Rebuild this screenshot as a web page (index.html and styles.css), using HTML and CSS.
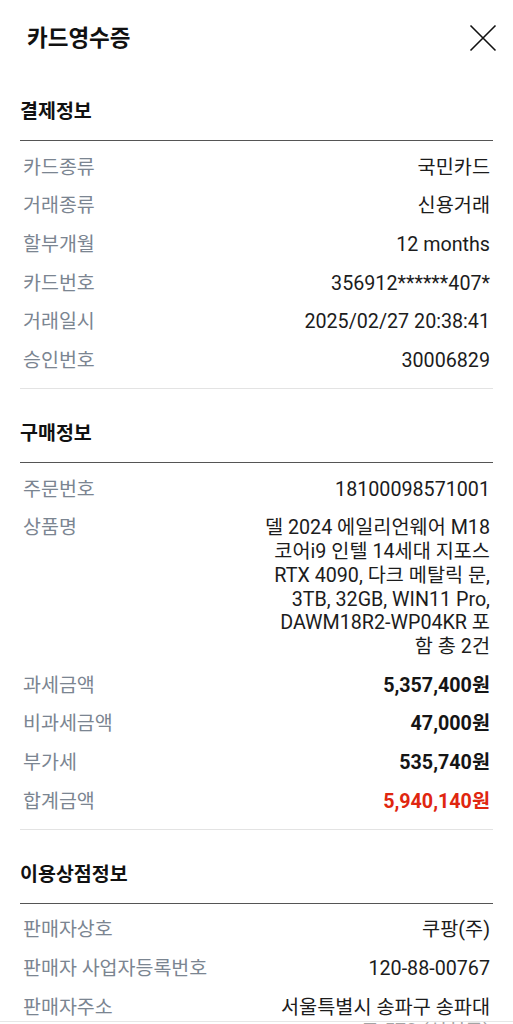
FILE: index.html
```html
<!DOCTYPE html>
<html lang="ko">
<head>
<meta charset="utf-8">
<title>카드영수증</title>
<link rel="stylesheet" href="styles.css">
</head>
<body>
<header class="header">
  <h1 class="title">카드영수증</h1>
  <button class="close" aria-label="닫기">
    <svg width="28" height="28" viewBox="0 0 28 28"><path d="M1.5 1.5 L26.5 26.5 M26.5 1.5 L1.5 26.5" stroke="#111" stroke-width="1.6" fill="none"/></svg>
  </button>
</header>

<section class="section">
  <h2 class="section-title">결제정보</h2>
  <dl class="rows">
    <div class="row"><dt>카드종류</dt><dd>국민카드</dd></div>
    <div class="row"><dt>거래종류</dt><dd>신용거래</dd></div>
    <div class="row"><dt>할부개월</dt><dd>12 months</dd></div>
    <div class="row"><dt>카드번호</dt><dd>356912******407*</dd></div>
    <div class="row"><dt>거래일시</dt><dd>2025/02/27 20:38:41</dd></div>
    <div class="row"><dt>승인번호</dt><dd>30006829</dd></div>
  </dl>
</section>

<section class="section">
  <h2 class="section-title">구매정보</h2>
  <dl class="rows">
    <div class="row"><dt>주문번호</dt><dd>18100098571001</dd></div>
    <div class="row"><dt>상품명</dt><dd class="multi">델 2024 에일리언웨어 M18<br>코어i9 인텔 14세대 지포스<br>RTX 4090, 다크 메탈릭 문,<br>3TB, 32GB, WIN11 Pro,<br>DAWM18R2-WP04KR 포<br>함 총 2건</dd></div>
    <div class="row"><dt>과세금액</dt><dd class="strong">5,357,400원</dd></div>
    <div class="row"><dt>비과세금액</dt><dd class="strong">47,000원</dd></div>
    <div class="row"><dt>부가세</dt><dd class="strong">535,740원</dd></div>
    <div class="row"><dt>합계금액</dt><dd class="strong total">5,940,140원</dd></div>
  </dl>
</section>

<section class="section">
  <h2 class="section-title">이용상점정보</h2>
  <dl class="rows">
    <div class="row"><dt>판매자상호</dt><dd>쿠팡(주)</dd></div>
    <div class="row"><dt>판매자 사업자등록번호</dt><dd>120-88-00767</dd></div>
    <div class="row"><dt>판매자주소</dt><dd class="multi">서울특별시 송파구 송파대<br>로 570 (신천동)</dd></div>
  </dl>
</section>
<div class="bottom-bar"></div>
</body>
</html>
```
FILE: styles.css
```css
* { box-sizing: border-box; }
html, body { margin: 0; padding: 0; background: #fff; }
body {
  font-family: Roboto, "Noto Sans CJK KR", sans-serif;
  color: #222;
}
.header {
  height: 67px;
  display: flex;
  align-items: center;
  justify-content: space-between;
  padding: 8px 16px 0 27px;
}
.title {
  margin: 0;
  font-size: 22.5px;
  font-weight: 700;
  color: #111;
  line-height: 28px;
}
.close {
  border: 0;
  background: none;
  padding: 0;
  width: 28px;
  height: 28px;
  display: flex;
}
.section {
  padding: 0 20px;
  margin-top: 33px;
}
.section-title {
  margin: 0;
  font-size: 19.5px;
  font-weight: 700;
  line-height: 24px;
  color: #111;
  padding-bottom: 16px;
  border-bottom: 1.5px solid #555;
}
.rows {
  margin: 0;
  padding: 7px 3px 8px;
  border-bottom: 1px solid #e3e3e3;
}
.row {
  display: flex;
  justify-content: space-between;
  align-items: flex-start;
  padding: 7.5px 0;
  font-size: 19.7px;
  line-height: 23.7px;
}
.row dt {
  color: #7b8591;
  white-space: nowrap;
  font-size: 19.5px;
}
.row dd {
  margin: 0;
  text-align: right;
  color: #1c1c1c;
}
.row dd.strong { font-weight: 700; color: #151515; }
.row dd.total { color: #e0260f; }
.bottom-bar {
  position: fixed;
  left: 0; right: 0; bottom: 0;
  height: 3px;
  background: rgba(255,255,255,0.6);
  border-top: 1px solid #e6e6e6;
}
```
